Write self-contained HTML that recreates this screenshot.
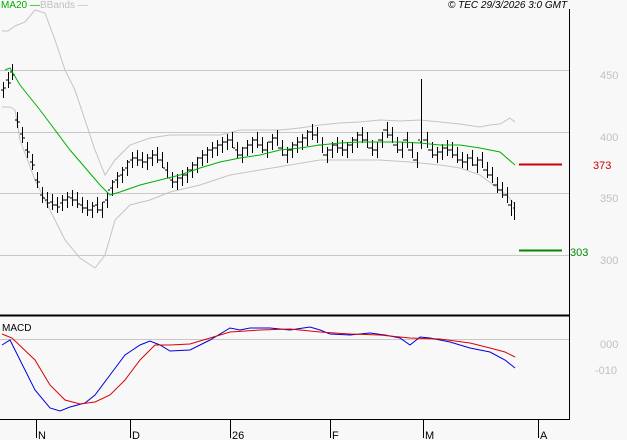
<!DOCTYPE html>
<html><head><meta charset="utf-8"><style>
html,body{margin:0;padding:0;background:#f8f8f8;}
svg{display:block;font-family:"Liberation Sans",sans-serif;}
</style></head><body>
<svg width="627" height="440" viewBox="0 0 627 440" xmlns="http://www.w3.org/2000/svg">
<rect width="627" height="440" fill="#f8f8f8"/>
<g stroke="#c8c8c8" stroke-width="1" shape-rendering="crispEdges">
<line x1="0" y1="70.5" x2="569" y2="70.5"/>
<line x1="0" y1="132.5" x2="569" y2="132.5"/>
<line x1="0" y1="193.5" x2="569" y2="193.5"/>
<line x1="0" y1="255.5" x2="569" y2="255.5"/>
<line x1="0" y1="339.5" x2="569" y2="339.5"/>
</g>
<g fill="none" stroke="#c4c4c4" stroke-width="1">
<polyline points="2,31 8,31 15,26 25,22 35,10 45,13 55,40 65,70 75,90 85,120 95,150 105,175 115,160 130,145 150,138 170,135 200,135 220,135 240,130 260,130 280,130 300,128 320,125 340,123 360,122 380,120 400,121 420,120 440,122 460,124 480,127 490,125 500,124 510,118 515,122"/>
<polyline points="2,107 10,107 15,110 20,140 35,180 50,210 65,240 80,258 95,268 105,255 115,220 130,205 150,200 170,192 200,185 230,175 260,170 290,165 320,160 350,160 380,160 410,162 440,165 460,168 480,175 500,190 507,195 515,205"/>
</g>
<path fill="none" stroke="#000" stroke-width="1" shape-rendering="crispEdges" d="M3.5,82v16M8.5,72v16M12.5,64v16M17.5,112v16M22.5,127v16M27.5,142v16M32.5,154v16M37.5,172v16M42.5,187v16M47.5,192v16M52.5,194v16M57.5,197v16M62.5,195v16M67.5,192v16M72.5,190v16M77.5,192v16M82.5,197v16M87.5,200v16M92.5,202v16M97.5,197v16M102.5,202v16M107.5,192v16M112.5,180v16M117.5,172v16M122.5,167v16M127.5,160v16M132.5,152v16M137.5,150v16M142.5,152v16M147.5,154v16M152.5,150v16M157.5,147v16M162.5,152v16M167.5,162v16M172.5,172v16M177.5,174v16M182.5,170v16M187.5,167v16M192.5,162v16M197.5,157v16M202.5,150v16M207.5,147v16M212.5,142v16M217.5,140v16M222.5,137v16M227.5,134v16M232.5,132v16M237.5,142v16M242.5,147v16M247.5,140v16M252.5,137v16M257.5,132v16M262.5,137v16M267.5,142v16M272.5,134v16M277.5,130v16M282.5,140v16M287.5,147v16M292.5,142v16M297.5,137v16M302.5,134v16M307.5,130v16M312.5,124v16M317.5,127v16M322.5,137v16M327.5,147v16M332.5,142v16M337.5,137v16M342.5,140v16M347.5,142v16M352.5,137v16M357.5,132v16M362.5,127v16M367.5,132v16M372.5,140v16M377.5,142v16M382.5,132v16M387.5,122v16M392.5,127v16M397.5,137v16M402.5,142v16M407.5,132v16M412.5,142v16M417.5,152v16M421.5,79v70M427.5,132v16M432.5,142v16M437.5,147v16M442.5,144v16M447.5,140v16M452.5,142v16M457.5,147v16M462.5,152v16M467.5,154v16M472.5,150v16M477.5,157v16M482.5,152v16M487.5,162v16M492.5,167v16M497.5,177v16M502.5,182v16M507.5,187v16M511.5,200v16M514.5,202v18"/>
<path fill="none" stroke="#000" stroke-width="1" shape-rendering="crispEdges" d="M1,90h2M4,88h2M6,80h2M9,83h2M10,72h2M13,75h2M15,120h2M18,122h2M20,134h2M23,138h2M25,150h2M28,152h2M30,162h2M33,165h2M35,180h2M38,182h2M40,195h2M43,198h2M45,200h2M48,203h2M50,202h2M53,205h2M55,205h2M58,207h2M60,203h2M63,200h2M65,200h2M68,197h2M70,198h2M73,200h2M75,200h2M78,204h2M80,205h2M83,208h2M85,208h2M88,210h2M90,210h2M93,206h2M95,205h2M98,210h2M100,210h2M103,202h2M105,200h2M108,190h2M110,188h2M113,182h2M115,180h2M118,176h2M120,175h2M123,170h2M125,168h2M128,162h2M130,160h2M133,158h2M135,158h2M138,160h2M140,160h2M143,162h2M145,162h2M148,158h2M150,158h2M153,155h2M155,155h2M158,160h2M160,160h2M163,168h2M165,170h2M168,178h2M170,180h2M173,182h2M175,182h2M178,178h2M180,178h2M183,175h2M185,175h2M188,170h2M190,170h2M193,165h2M195,165h2M198,158h2M200,158h2M203,155h2M205,155h2M208,150h2M210,150h2M213,148h2M215,148h2M218,145h2M220,145h2M223,142h2M225,142h2M228,140h2M230,140h2M233,148h2M235,150h2M238,155h2M240,155h2M243,148h2M245,148h2M248,145h2M250,145h2M253,140h2M255,140h2M258,145h2M260,145h2M263,150h2M265,150h2M268,142h2M270,142h2M273,138h2M275,138h2M278,148h2M280,148h2M283,155h2M285,155h2M288,150h2M290,150h2M293,145h2M295,145h2M298,142h2M300,142h2M303,138h2M305,138h2M308,132h2M310,132h2M313,135h2M315,135h2M318,145h2M320,145h2M323,155h2M325,155h2M328,150h2M330,150h2M333,145h2M335,145h2M338,148h2M340,148h2M343,150h2M345,150h2M348,145h2M350,145h2M353,140h2M355,140h2M358,135h2M360,135h2M363,140h2M365,140h2M368,148h2M370,148h2M373,150h2M375,150h2M378,140h2M380,140h2M383,130h2M385,130h2M388,135h2M390,135h2M393,145h2M395,145h2M398,150h2M400,150h2M403,140h2M405,140h2M408,150h2M410,150h2M413,160h2M415,160h2M418,140h2M420,142h2M423,140h2M425,140h2M428,150h2M430,150h2M433,155h2M435,155h2M438,152h2M440,152h2M443,148h2M445,148h2M448,150h2M450,150h2M453,155h2M455,155h2M458,160h2M460,160h2M463,162h2M465,162h2M468,158h2M470,158h2M473,165h2M475,165h2M478,160h2M480,160h2M483,170h2M485,170h2M488,175h2M490,175h2M493,185h2M495,185h2M498,190h2M500,190h2M503,195h2M505,195h2M508,205h2M510,205h2M513,208h2"/>
<polyline fill="none" stroke="#00b000" stroke-width="1" points="5,70 10,68 20,85 40,110 70,150 100,185 110,195 120,192 140,185 160,180 180,175 200,168 220,162 240,158 260,155 280,150 300,148 320,145 340,143 360,142 380,142 400,142 420,143 440,145 460,145 480,148 500,152 515,165"/>
<line x1="519" y1="164.5" x2="562" y2="164.5" stroke="#cc0000" stroke-width="2"/>
<line x1="519" y1="250.5" x2="562" y2="250.5" stroke="#008800" stroke-width="2"/>
<polyline fill="none" stroke="#0000dd" stroke-width="1" points="2,345 10,340 20,360 35,390 50,408 60,411 70,407 85,403 95,395 110,375 125,355 140,345 150,341 160,345 170,351 190,350 210,340 230,328 240,330 250,328 270,328 290,330 310,327 320,330 330,334 350,335 370,333 385,335 400,338 410,345 420,337 430,338 450,342 470,348 490,352 505,360 515,368"/>
<polyline fill="none" stroke="#dd0000" stroke-width="1" points="2,334 12,338 35,360 50,385 65,400 80,404 95,402 110,395 125,380 140,360 155,345 170,345 190,344 210,338 230,332 260,330 290,329 320,332 350,334 380,335 410,338 440,339 470,343 490,348 505,352 515,357"/>
<g stroke="#000" shape-rendering="crispEdges">
<line x1="569.5" y1="9" x2="569.5" y2="420" stroke-width="1"/>
<line x1="0" y1="315.5" x2="569" y2="315.5" stroke-width="2"/>
<line x1="0" y1="419.5" x2="570" y2="419.5" stroke-width="1"/>
<line x1="36.5" y1="420" x2="36.5" y2="438"/>
<line x1="130.5" y1="420" x2="130.5" y2="438"/>
<line x1="230.5" y1="420" x2="230.5" y2="438"/>
<line x1="330.5" y1="420" x2="330.5" y2="438"/>
<line x1="423.5" y1="420" x2="423.5" y2="438"/>
<line x1="538.5" y1="420" x2="538.5" y2="438"/>
</g>
<g font-size="11" fill="#000">
<text x="38" y="439">N</text><text x="132" y="439">D</text><text x="232" y="439">26</text>
<text x="332" y="439">F</text><text x="425" y="439">M</text><text x="540" y="439">A</text>
<text x="2" y="331" font-size="10">MACD</text>
<text x="448" y="8" font-size="10" font-style="italic">© TEC 29/3/2026 3:0 GMT</text>
</g>
<text x="1" y="8" font-size="10" fill="#00b000">MA20 —</text>
<text x="40" y="8" font-size="10" fill="#c0c0c0">BBands —</text>
<g font-size="11" fill="#c0c0c0">
<text x="600" y="79">450</text><text x="600" y="141">400</text><text x="600" y="202">350</text><text x="600" y="264">300</text>
<text x="600" y="348">000</text><text x="595" y="374">-010</text>
</g>
<text x="593" y="169" font-size="11" fill="#cc0000">373</text>
<text x="570" y="256" font-size="11" fill="#008800">303</text>
</svg>
</body></html>
